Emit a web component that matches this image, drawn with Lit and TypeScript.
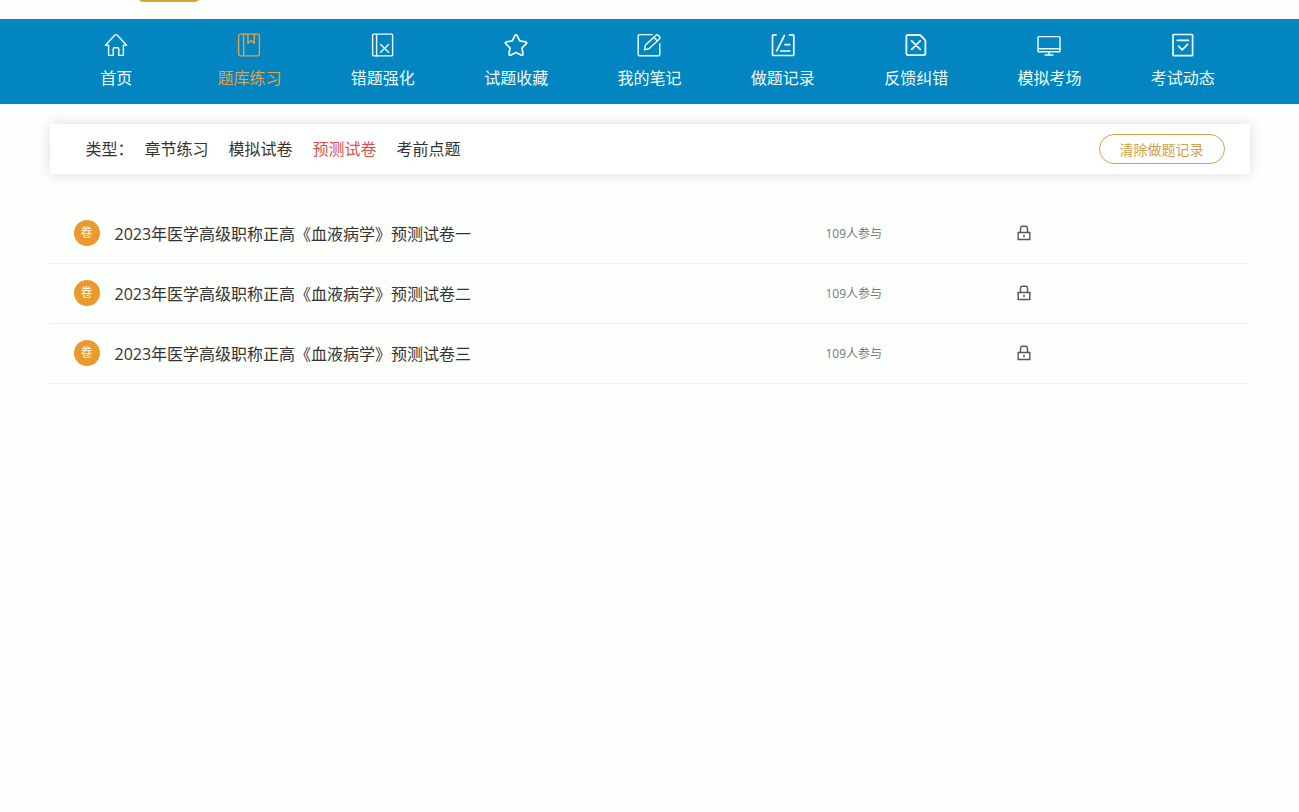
import { LitElement, html, css, svg } from "lit";
import { customElement, property, state } from "lit/decorators.js";
import { classMap } from "lit/directives/class-map.js";

const icons = {
  home: svg`<path d="M4.6 12.3H1.4L10.9 2.1a1.5 1.5 0 0 1 2.2 0l9.5 10.2h-3.2v10.1h-4.6v-6.6a1 1 0 0 0-1-1h-3.6a1 1 0 0 0-1 1v6.6H4.6z"/>`,
  book: svg`<rect x="1.6" y="1.1" width="20.8" height="21.8" rx="1.8"/><path d="M6.6 1.1v21.8M10.9 1.1v9.1l3.2-2.7 3.2 2.7V1.1"/>`,
  wrong: svg`<rect x="1.6" y="1.1" width="20" height="21.8" rx="1"/><path d="M5.6 1.1v21.8M9.6 11.6l8 7.6M17.6 11.6l-8 7.6"/>`,
  star: svg`<path stroke-width="1.7" d="M11 2.4a1.1 1.1 0 0 1 2 0l2.7 5.5 6 .9a1.1 1.1 0 0 1 .6 1.9l-4.3 4.3 1 6a1.1 1.1 0 0 1-1.6 1.2L12 19.4l-5.4 2.8A1.1 1.1 0 0 1 5 21l1-6-4.3-4.3a1.1 1.1 0 0 1 .6-1.9l6-.9z"/>`,
  note: svg`<path d="M15.4 1.6H2.2a1 1 0 0 0-1 1v19.2a1 1 0 0 0 1 1h19.6a1 1 0 0 0 1-1V10.6M7.4 16.9l1.1-4.8L19 2.2a1.5 1.5 0 0 1 2.1.1l1.4 1.5a1.5 1.5 0 0 1-.1 2.1L12 15.7zM16.9 4.3l3.5 3.7"/>`,
  record: svg`<path stroke-width="1.7" d="M5 1.9H2.5a1 1 0 0 0-1 1v18.6a1 1 0 0 0 1 1h19.3a1 1 0 0 0 1-1V2.9a1 1 0 0 0-1-1h-3.3M13.4 2.5 5.7 17.8M9.7 18h9M14 11.6h4.7"/>`,
  feedback: svg`<path stroke-width="1.8" d="M3.4 2h12.7l5.3 5.3v13.2a1.6 1.6 0 0 1-1.6 1.6H4a1.6 1.6 0 0 1-1.6-1.6V3.2A1.2 1.2 0 0 1 3.4 2zM7.7 7.9l8.5 8.5M16.2 7.9l-8.5 8.5"/>`,
  monitor: svg`<rect x="1" y="3.6" width="22" height="15.2" rx=".8"/><path d="M1 15.7h22M12 18.8v3M8 22h8"/>`,
  exam: svg`<rect stroke-width="1.7" x="2" y="1.5" width="19.6" height="21.2" rx=".8"/><path stroke-width="1.7" d="M6.3 7.4h11.2M7.6 13.2l3.6 3.6 5.4-5.4"/>`,
};

interface NavItem { label: string; icon: keyof typeof icons }

const navItems: NavItem[] = [
  { label: "首页", icon: "home" },
  { label: "题库练习", icon: "book" },
  { label: "错题强化", icon: "wrong" },
  { label: "试题收藏", icon: "star" },
  { label: "我的笔记", icon: "note" },
  { label: "做题记录", icon: "record" },
  { label: "反馈纠错", icon: "feedback" },
  { label: "模拟考场", icon: "monitor" },
  { label: "考试动态", icon: "exam" },
];

@customElement("main-nav")
export class MainNav extends LitElement {
  @property() current = "";

  static styles = css`
    :host { display: block; background: #0285c0; }
    .items { display: flex; max-width: 1200px; margin: 0 auto; }
    .item {
      flex: 1;
      display: flex;
      flex-direction: column;
      align-items: center;
      gap: 9px;
      padding: 14px 0;
      color: #f0fffd;
      font-size: 16px;
      line-height: 24px;
      text-decoration: none;
      white-space: nowrap;
    }
    .icon {
      width: 24px;
      height: 24px;
      fill: none;
      stroke: currentColor;
      stroke-width: 1.4;
      stroke-linecap: round;
      stroke-linejoin: round;
    }
    .active { color: #dda350; }
  `;

  render() {
    return html`<nav class="items">
      ${navItems.map((i) => html`
        <a href="#" class=${classMap({ item: true, active: i.label === this.current })}>
          <svg class="icon" viewBox="0 0 24 24" aria-hidden="true">${icons[i.icon]}</svg>
          <span>${i.label}</span>
        </a>`)}
    </nav>`;
  }
}

@customElement("paper-list")
export class PaperList extends LitElement {
  @property({ attribute: false }) papers: { title: string; joined: number }[] = [];

  static styles = css`
    :host { display: block; }
    .list { margin: 0; padding: 0; list-style: none; }
    .row {
      display: grid;
      grid-template-columns: 26px 1fr 191px 231px;
      align-items: center;
      height: 57px;
      padding: 0 0 2px 24px;
      border-bottom: 1px solid #eeefed;
    }
    .badge {
      width: 26px;
      height: 26px;
      border-radius: 50%;
      background: #ea9a2d;
      color: #fffbe8;
      font-size: 12px;
      line-height: 26px;
      text-align: center;
    }
    .title {
      padding: 2px 0 0 15px;
      color: #333;
      font-size: 16px;
      line-height: 24px;
      text-decoration: none;
    }
    .joined { padding-top: 2px; color: #777; font-size: 12px; line-height: 18px; }
    .lock {
      width: 14px;
      height: 16px;
      fill: none;
      stroke: #555;
      stroke-width: 1.4;
    }
  `;

  render() {
    return html`<ul class="list">
      ${this.papers.map((p) => html`
        <li class="row">
          <span class="badge">卷</span>
          <a class="title" href="#">${p.title}</a>
          <span class="joined">${p.joined}人参与</span>
          <svg class="lock" viewBox="0 0 14 16" role="img" aria-label="未解锁">
            <path d="M1.2 7.5h11.6v7H1.2zM3.5 7.5V3.2a2 2 0 0 1 2-2h3a2 2 0 0 1 2 2v4.3M7 9.8v2.4"/>
          </svg>
        </li>`)}
    </ul>`;
  }
}

@customElement("app-root")
export class AppRoot extends LitElement {
  @state() private type = "预测试卷";

  private types = ["章节练习", "模拟试卷", "预测试卷", "考前点题"];

  private papers = ["一", "二", "三"].map((n) => ({
    title: `2023年医学高级职称正高《血液病学》预测试卷${n}`,
    joined: 109,
  }));

  static styles = css`
    :host {
      display: block;
      min-height: 100vh;
      background: #fdfffd;
      font-family: "Open Sans", "Noto Sans CJK SC", sans-serif;
    }
    .top { height: 19px; overflow: hidden; }
    .top-inner { max-width: 1200px; margin: 0 auto; }
    .tab {
      width: 62px;
      height: 24px;
      margin: -22px 0 0 88px;
      border-radius: 5px;
      background: #d5a83c;
    }
    .page { max-width: 1200px; margin: 0 auto; }
    .filter {
      display: flex;
      align-items: center;
      height: 50px;
      margin-top: 20px;
      padding: 0 25px 0 36px;
      background: #fefffe;
      box-shadow: 0 0 12px rgba(0, 0, 0, 0.14);
      color: #333;
      font-size: 16px;
    }
    .label { width: 59px; line-height: 24px; }
    .types { display: flex; flex: 1; gap: 20px; }
    .type {
      padding: 0;
      border: 0;
      background: none;
      color: #333;
      font: inherit;
      line-height: 24px;
      cursor: pointer;
    }
    .chosen { color: #dd5050; }
    .clear {
      height: 30px;
      padding: 2px 20px 0;
      border: 1px solid #d29f4c;
      border-radius: 15px;
      background: transparent;
      color: #d29f4c;
      font: inherit;
      font-size: 14px;
      line-height: 26px;
      cursor: pointer;
    }
    .papers { margin: 30px 2px 0 0; }
  `;

  render() {
    return html`
      <header class="top"><div class="top-inner"><div class="tab"></div></div></header>
      <main-nav current="题库练习"></main-nav>
      <main class="page">
        <section class="filter">
          <span class="label" id="type-label">类型：</span>
          <div class="types" role="group" aria-labelledby="type-label">
            ${this.types.map((t) => html`
              <button type="button" class=${classMap({ type: true, chosen: t === this.type })}
                @click=${() => (this.type = t)}>${t}</button>`)}
          </div>
          <button type="button" class="clear">清除做题记录</button>
        </section>
        <paper-list class="papers" .papers=${this.papers}></paper-list>
      </main>`;
  }
}
